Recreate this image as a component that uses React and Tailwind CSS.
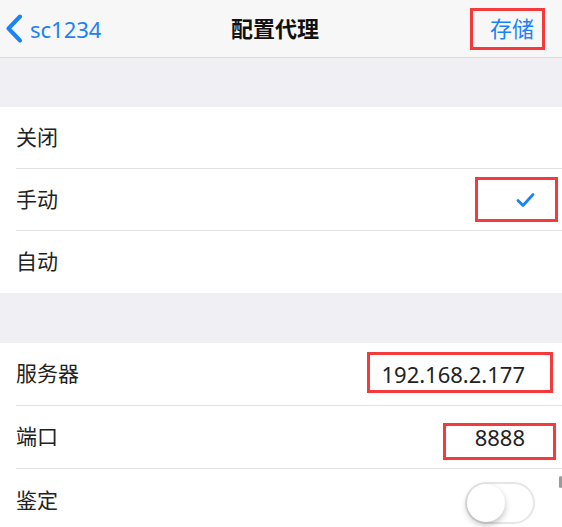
import React, { useState } from "react";

const font = {
  fontFamily: '"Noto Sans", "Noto Sans CJK SC", sans-serif',
};

function Row({ label, height = "h-[62px]", last, children }) {
  return (
    <div className={`relative flex items-center ${height} pl-4`}>
      <div className={`flex h-full flex-1 items-center pr-[37px] ${last ? "" : "border-b border-[#e3e3e6]"}`}>
        <span className="flex-1 text-[21px] text-[#222]">{label}</span>
        {children}
      </div>
    </div>
  );
}

// red annotation box drawn over the screenshot
function Mark({ className }) {
  return <div className={`pointer-events-none absolute border-[3px] border-[#f43a3a] ${className}`} />;
}

export default function App() {
  const [mode, setMode] = useState("manual");
  const [auth, setAuth] = useState(false);

  return (
    <div className="relative h-[527px] w-[562px] overflow-hidden bg-[#efeff4]" style={font}>
      {/* nav bar */}
      <div className="relative flex h-[58px] items-center border-b border-[#d9d9dc] bg-[#f7f7f8]">
        <div className="flex w-[120px] items-center pl-[5px] text-[#1b82f8]">
          <svg width="18" height="29" viewBox="0 0 18 29" fill="none">
            <path d="M15 2.5L3.5 14.5L15 26.5" stroke="currentColor" strokeWidth="4" strokeLinecap="round" strokeLinejoin="round" />
          </svg>
          <span className="ml-[7px] text-[22px] leading-none">sc1234</span>
        </div>
        <div className="flex-1 text-center text-[22px] font-bold text-[#111]">配置代理</div>
        <div className="flex w-[132px] justify-end pr-[28px] text-[22px] text-[#1b82f8]">存储</div>
        <Mark className="left-[470px] top-[8px] h-[42px] w-[75px]" />
      </div>

      <div className="h-[49px]" />

      {/* proxy mode */}
      <div className="bg-white">
        <Row label="关闭">
          <button onClick={() => setMode("off")} className="h-full w-10" />
        </Row>
        <Row label="手动">
          {mode === "manual" && (
            <svg width="19" height="16" viewBox="0 0 19 16" fill="none" className="mr-[-10px]">
              <path d="M2 8.5L7 13.5L17 2.5" stroke="#1b82f8" strokeWidth="2.8" strokeLinecap="round" strokeLinejoin="round" />
            </svg>
          )}
          <Mark className="left-[475px] top-[8px] h-[45px] w-[83px]" />
        </Row>
        <Row label="自动" last>
          <button onClick={() => setMode("auto")} className="h-full w-10" />
        </Row>
      </div>

      <div className="h-[50px]" />

      {/* server settings */}
      <div className="bg-white">
        <Row label="服务器" height="h-[63px]">
          <span className="text-[22px] text-[#222]">192.168.2.177</span>
          <Mark className="left-[367px] top-[9px] h-[41px] w-[186px]" />
        </Row>
        <Row label="端口" height="h-[63px]">
          <span className="text-[22px] text-[#222]">8888</span>
          <Mark className="left-[443px] top-[17px] h-[37px] w-[113px]" />
        </Row>
        <Row label="鉴定" height="h-[63px]" last>
          <button
            onClick={() => setAuth(!auth)}
            className={`relative mr-[-10px] mt-[4px] h-[42px] w-[70px] rounded-full border-2 ${auth ? "border-[#4cd964] bg-[#4cd964]" : "border-[#e6e6e8] bg-white"}`}
          >
            <span
              className={`absolute top-[0px] h-[38px] w-[38px] rounded-full bg-white shadow-[0_3px_6px_rgba(0,0,0,0.25)] ${auth ? "left-[28px]" : "left-[0px]"}`}
            />
          </button>
        </Row>
      </div>

      {/* scroll indicator */}
      <div className="absolute right-0 top-[476px] h-[12px] w-[3px] rounded-full bg-[#9a9a9a]" />
    </div>
  );
}
